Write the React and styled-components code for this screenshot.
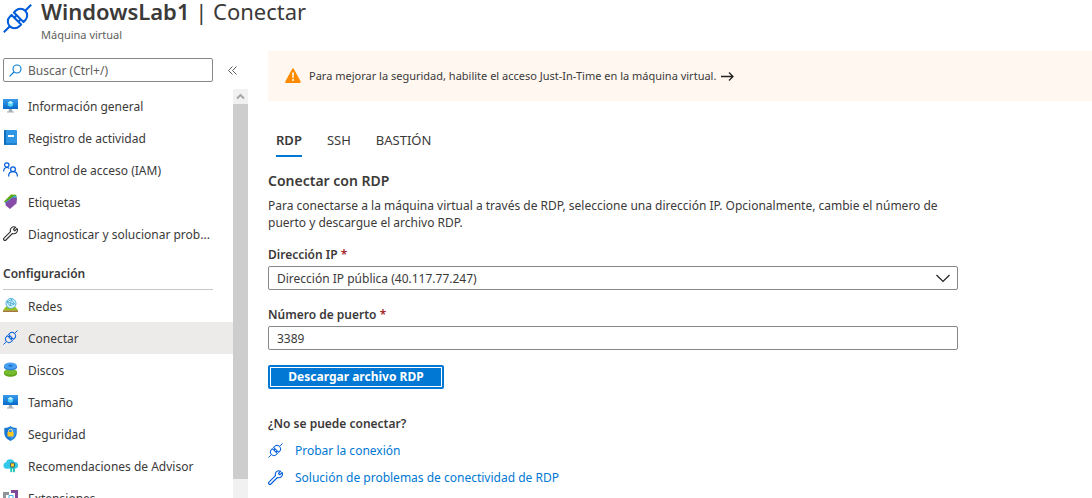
import React from "react";
import styled, { createGlobalStyle } from "styled-components";

const GlobalStyle = createGlobalStyle`
  *, *::before, *::after { box-sizing: border-box; }
  body {
    margin: 0;
    background: #fff;
    color: #3b3a39;
    font-family: "Noto Sans", "Open Sans", sans-serif;
    font-size: 12px;
    line-height: 16px;
  }
  button, input, select { font: inherit; color: inherit; }
`;

const Page = styled.div`
  display: flex;
  flex-direction: column;
  height: 100vh;
  overflow: hidden;
`;

const Header = styled.header`
  display: flex;
  flex: none;
  gap: 9px;
  height: 51px;
  padding-left: 3px;
`;

const HeaderIcon = styled.div`
  padding-top: 4px;
  svg { display: block; }
`;

const Title = styled.h1`
  margin: 0;
  font-size: 22px;
  line-height: 22px;
  font-weight: 400;
  white-space: nowrap;
  strong { font-weight: 600; }
`;

const Subtitle = styled.p`
  margin: 5px 0 0;
  font-size: 11px;
  color: #605e5c;
`;

const Body = styled.div`
  display: flex;
  flex: 1;
  min-height: 0;
`;

const Sidebar = styled.aside`
  display: flex;
  flex-direction: column;
  flex: none;
  width: 248px;
`;

const SearchRow = styled.div`
  display: flex;
  align-items: center;
  gap: 12px;
  flex: none;
  height: 38px;
  padding-left: 3px;
`;

const SearchBox = styled.label`
  display: flex;
  align-items: center;
  gap: 6px;
  width: 210px;
  height: 24px;
  padding: 0 5px;
  border: 1px solid #8a8886;
  border-radius: 2px;
`;

const SearchInput = styled.input`
  flex: 1;
  min-width: 0;
  padding: 2px 0 0;
  border: 0;
  outline: 0;
  background: none;
  &::placeholder { color: #605e5c; opacity: 1; }
`;

const CollapseButton = styled.button`
  display: flex;
  padding: 3px;
  border: 0;
  background: none;
`;

const MenuArea = styled.div`
  display: flex;
  flex: 1;
  min-height: 0;
`;

const Menu = styled.nav`
  flex: 1;
  min-width: 0;
  overflow: hidden;
  padding-top: 1px;
`;

const MenuItem = styled.a`
  display: flex;
  align-items: center;
  gap: 10px;
  height: 32px;
  padding: 2px 0 0 3px;
  color: inherit;
  text-decoration: none;
  white-space: nowrap;
  background: ${(p) => (p.$active ? "#edebe9" : "transparent")};
  svg { flex: none; margin-bottom: 3px; }
`;

const MenuHeading = styled.h2`
  margin: 0 20px 0 3px;
  padding: 16px 0 7px;
  border-bottom: 1px solid #c8c6c4;
  font-size: 12px;
  line-height: 16px;
  font-weight: 600;
`;

const ScrollTrack = styled.div`
  display: flex;
  flex-direction: column;
  flex: none;
  width: 15px;
  padding-bottom: 19px;
  background: #f1f1f1;
`;

const ScrollArrow = styled.div`
  display: flex;
  align-items: center;
  justify-content: center;
  height: 15px;
`;

const ScrollThumb = styled.div`
  flex: 1;
  background: #cdcdcd;
`;

const Main = styled.main`
  flex: 1;
  min-width: 0;
  padding-left: 20px;
`;

const Banner = styled.a`
  display: flex;
  align-items: center;
  gap: 8px;
  height: 50px;
  padding-left: 17px;
  border-radius: 2px 0 0 2px;
  background: #fff7f0;
  color: inherit;
  font-size: 11px;
  text-decoration: none;
`;

const BannerText = styled.span`
  display: flex;
  align-items: center;
  gap: 5px;
`;

const Tabs = styled.div`
  display: flex;
  gap: 25px;
  margin-top: 27px;
  padding-left: 8px;
`;

const Tab = styled.button`
  height: 29px;
  padding: 0 0 3px;
  border: 0;
  border-bottom: 2px solid ${(p) => (p.$active ? "#0078d4" : "transparent")};
  background: none;
  font-size: 13px;
  font-weight: ${(p) => (p.$active ? 600 : 400)};
`;

const Form = styled.form`
  max-width: 690px;
`;

const Heading = styled.h2`
  margin: 14px 0 6px;
  font-size: 14px;
  line-height: 20px;
  font-weight: 600;
`;

const Paragraph = styled.p`
  margin: 0;
  line-height: 17px;
`;

const Field = styled.div`
  margin-top: ${(p) => (p.$first ? 16 : 17)}px;
`;

const Label = styled.label`
  display: block;
  margin-bottom: 3px;
  font-weight: 600;
  font-size: 12px;
  span { color: #a4262c; }
`;

const SelectWrap = styled.div`
  position: relative;
  svg {
    position: absolute;
    right: 8px;
    top: 8px;
    pointer-events: none;
  }
`;

const Control = styled.input`
  display: block;
  width: 100%;
  height: 24px;
  padding: 1px 8px 0;
  border: 1px solid #8a8886;
  border-radius: 2px;
  background: #fff;
  appearance: none;
  outline: 0;
`;

const PrimaryButton = styled.button`
  display: block;
  width: 176px;
  height: 24px;
  margin-top: 15px;
  padding: 0;
  border: 0;
  border-radius: 2px;
  outline: 1px solid #fff;
  outline-offset: -3px;
  background: #0078d4;
  color: #fff;
  font-weight: 700;
`;

const HelpHeading = styled.h3`
  margin: 27px 0 5px;
  font-size: 12px;
  line-height: 16px;
  font-weight: 600;
`;

const HelpLink = styled.a`
  display: flex;
  align-items: center;
  gap: 12px;
  height: 27px;
  color: #0078d4;
  text-decoration: none;
`;

const Svg = ({ size = 15, box = "0 0 15 15", children }) => (
  <svg width={size} height={size} viewBox={box} fill="none" aria-hidden="true">
    {children}
  </svg>
);

const PlugIcon = ({ size = 15, width = 1.8 }) => (
  <Svg size={size} box="0 0 28 28">
    <g stroke="#015cda" strokeWidth={width} strokeLinejoin="round">
      <path d="M.8 27.2 6.600 21.400M21.400 6.600l5.800-5.800" />
      <g transform="rotate(-45 14 14)">
        <path d="M12.400 7.500H10a6.500 6.500 0 0 0 0 13h2.400zM15.600 7.500H18a6.500 6.500 0 0 1 0 13h-2.400z" />
        <path d="M12.400 11.300h3.200M12.400 16.700h3.200" />
      </g>
    </g>
  </Svg>
);

const WrenchIcon = ({ color = "#323130" }) => (
  <Svg>
    <path
      d="M12.7 1.2a3.7 3.7 0 0 0-5.2 4.5L1 12.1a1.3 1.3 0 0 0 1.9 1.9l6.5-6.5a3.7 3.7 0 0 0 4.7-5L11.8 4.8 10.4 3.5z"
      stroke={color}
      strokeWidth="1.1"
      strokeLinejoin="round"
    />
  </Svg>
);

const MonitorIcon = () => (
  <Svg>
    <defs>
      <linearGradient id="screen" x1="0" y1="0" x2="0" y2="1">
        <stop stopColor="#3a9bec" />
        <stop offset="1" stopColor="#0869c9" />
      </linearGradient>
    </defs>
    <path d="M0 1h15v10H0z" fill="url(#screen)" />
    <path d="M6 11h3l.4 2.4H11v1H4v-1h1.6z" fill="#a8adb2" />
    <path d="m7.5 3 2.6 1.5v3L7.5 9 4.9 7.500v-3z" fill="#50d2f5" />
    <path d="m7.500 3 2.600 1.500L7.500 6 4.900 4.500z" fill="#c3f1ff" />
  </Svg>
);

const LogIcon = () => (
  <Svg>
    <rect x="1" y="0" width="13" height="15" rx="1" fill="#2e96e4" />
    <path d="M1 1a1 1 0 0 1 1-1h1v15H2a1 1 0 0 1-1-1z" fill="#0f6cbd" />
    <path d="M3 13h11v1a1 1 0 0 1-1 1H3z" fill="#1c7fd0" />
    <rect x="5" y="5" width="6" height="2" fill="#fff" />
  </Svg>
);

const PeopleIcon = () => (
  <Svg>
    <g stroke="#015cda" strokeWidth="1.2">
      <circle cx="3.800" cy="3" r="2.200" />
      <path d="M.6 9.500c0-2.600 1.400-4 3.200-4 1 0 1.800.3 2.400 1" />
      <circle cx="10" cy="7.200" r="2.400" />
      <path d="M5.600 14.500c0-3 1.900-4.800 4.400-4.800s4.400 1.800 4.400 4.800" />
    </g>
  </Svg>
);

const TagIcon = () => (
  <Svg>
    <path d="M1 7.500 8 .4l5.200.4.4 4.600-6.800 7z" fill="#5ea60a" />
    <path d="m2 8.500 9.400-7 2.300 1.300v4L5 12.500z" fill="#32b4dc" />
    <path d="m2.500 9 7-5.400 4.300.2-.2 5.500L7 15l-4.300-3.600z" fill="#874ba8" />
  </Svg>
);

const NetworkIcon = () => (
  <Svg>
    <path d="m0 12.500 3.300-4.200h8.500l3.200 4.200z" fill="#95c11f" />
    <circle cx="8" cy="5.500" r="5" fill="#d9f3fb" stroke="#4bb0d8" />
    <path d="m4 4 4.500-2.500L11.500 6 7 8zM8.500 1.500 7 8M4 4l7.500 2" stroke="#3fa6d2" strokeWidth=".8" />
    <path d="m0 12.500 1.500-2h12l1.500 2z" fill="#95c11f" />
    <path d="M0 12.500h15V14H0z" fill="#a8763c" />
  </Svg>
);

const DisksIcon = () => (
  <Svg>
    <path d="M1 9.500h13v2c0 2-3 3.200-6.500 3.200S1 13.500 1 11.500z" fill="#5fa31c" />
    <ellipse cx="7.500" cy="9.800" rx="6.500" ry="3" fill="#76bc2d" />
    <path d="M1 4h13v1.200c0 2-3 3-6.500 3S1 7.200 1 5.200z" fill="#2a7fd8" />
    <ellipse cx="7.500" cy="3.800" rx="6.500" ry="3.200" fill="#4aa0f0" />
    <ellipse cx="7.500" cy="3.800" rx="2.200" ry="1" fill="#1c6fca" />
  </Svg>
);

const ShieldIcon = () => (
  <Svg>
    <path d="M7.500 0c2 1.500 3.500 1.900 6.200 2v5c0 3.600-2.600 6.200-6.200 8-3.600-1.800-6.200-4.400-6.200-8V2C4 1.900 5.500 1.500 7.500 0z" fill="#1778d6" />
    <path d="M7.500 1.300c1.700 1.200 3.100 1.500 5.200 1.700V7c0 3-2.200 5.200-5.200 6.800z" fill="#3d98ee" />
    <path d="M5.700 6.500V5a1.800 1.800 0 0 1 3.600 0v1.500" stroke="#ffe28a" />
    <rect x="4.500" y="6" width="6" height="4.500" rx=".6" fill="#ffc81e" />
  </Svg>
);

const AdvisorIcon = () => (
  <Svg>
    <path d="M3.500 10.800A3.300 3.300 0 0 1 3 4.300 4.300 4.300 0 0 1 11.200 4a3.400 3.400 0 0 1 .8 6.800z" fill="#32c8ea" />
    <path d="M7.300 9h1.900v5.500l-1-.7-.9.700zM10 9h1.900v5.500l-1-.7-.9.700z" fill="#1fc6b0" />
    <rect x="7.500" y="5" width="4" height="4" rx=".8" fill="#ffd02b" stroke="#3f5966" />
  </Svg>
);

const ExtensionsIcon = () => (
  <Svg>
    <path d="M0 2h6v3H3v4h3v3H0z" fill="#8f9499" />
    <path d="M8 0h7v8h-3V3H8z" fill="#804998" />
    <path d="M6 5.500h4v4H6z" stroke="#45b6e5" />
    <path d="M4 12h8v3H4z" fill="#804998" />
  </Svg>
);

const SearchIcon = () => (
  <Svg size={13} box="0 0 13 13">
    <circle cx="8" cy="5" r="4" stroke="#0078d4" strokeWidth="1.1" />
    <path d="M5 8 .6 12.400" stroke="#0078d4" strokeWidth="1.1" />
  </Svg>
);

const WarningIcon = () => (
  <Svg size={16} box="0 0 16 16">
    <path d="M7.100.9a1 1 0 0 1 1.800 0l6.800 12.600a1 1 0 0 1-.9 1.500H1.200a1 1 0 0 1-.9-1.500z" fill="#ff8c00" />
    <path d="M7.100 4.500h1.800L8.600 10H7.400z" fill="#fff" />
    <circle cx="8" cy="12" r="1" fill="#fff" />
  </Svg>
);

const mainItems = [
  ["Información general", MonitorIcon],
  ["Registro de actividad", LogIcon],
  ["Control de acceso (IAM)", PeopleIcon],
  ["Etiquetas", TagIcon],
  ["Diagnosticar y solucionar prob...", WrenchIcon],
];

const configItems = [
  ["Redes", NetworkIcon],
  ["Conectar", PlugIcon],
  ["Discos", DisksIcon],
  ["Tamaño", MonitorIcon],
  ["Seguridad", ShieldIcon],
  ["Recomendaciones de Advisor", AdvisorIcon],
  ["Extensiones", ExtensionsIcon],
];

const renderItem = ([label, Icon]) => (
  <MenuItem key={label} href="#" $active={label === "Conectar"}>
    <Icon />
    {label}
  </MenuItem>
);

export default function App() {
  return (
    <Page>
      <GlobalStyle />
      <Header>
        <HeaderIcon>
          <PlugIcon size={29} width={2} />
        </HeaderIcon>
        <div>
          <Title>
            <strong>WindowsLab1</strong> | Conectar
          </Title>
          <Subtitle>Máquina virtual</Subtitle>
        </div>
      </Header>
      <Body>
        <Sidebar>
          <SearchRow>
            <SearchBox>
              <SearchIcon />
              <SearchInput type="text" aria-label="Buscar" placeholder="Buscar (Ctrl+/)" />
            </SearchBox>
            <CollapseButton type="button" aria-label="Contraer menú">
              <Svg size={9} box="0 0 9 9">
                <path d="M4.500.5l-4 4 4 4M8.500.5l-4 4 4 4" stroke="#605e5c" />
              </Svg>
            </CollapseButton>
          </SearchRow>
          <MenuArea>
            <Menu>
              {mainItems.map(renderItem)}
              <MenuHeading>Configuración</MenuHeading>
              {configItems.map(renderItem)}
            </Menu>
            <ScrollTrack>
              <ScrollArrow>
                <Svg size={9} box="0 0 9 9">
                  <path d="M1 6.500 4.500 3 8 6.500" stroke="#a3a3a3" strokeWidth="1.800" />
                </Svg>
              </ScrollArrow>
              <ScrollThumb />
            </ScrollTrack>
          </MenuArea>
        </Sidebar>
        <Main>
          <Banner href="#">
            <WarningIcon />
            <BannerText>
              Para mejorar la seguridad, habilite el acceso Just-In-Time en la máquina virtual.
              <Svg size={13} box="0 0 13 13">
                <path d="M0 6.500h12M8 2.500l4 4-4 4" stroke="#201f1e" strokeWidth="1.300" />
              </Svg>
            </BannerText>
          </Banner>
          <Tabs role="tablist">
            <Tab type="button" role="tab" aria-selected="true" $active>RDP</Tab>
            <Tab type="button" role="tab" aria-selected="false">SSH</Tab>
            <Tab type="button" role="tab" aria-selected="false">BASTIÓN</Tab>
          </Tabs>
          <Form onSubmit={(e) => e.preventDefault()}>
            <Heading>Conectar con RDP</Heading>
            <Paragraph>
              Para conectarse a la máquina virtual a través de RDP, seleccione una dirección IP. Opcionalmente, cambie el número de puerto y descargue el archivo RDP.
            </Paragraph>
            <Field $first>
              <Label htmlFor="ip">Dirección IP <span>*</span></Label>
              <SelectWrap>
                <Control as="select" id="ip">
                  <option>Dirección IP pública (40.117.77.247)</option>
                </Control>
                <Svg size={14} box="0 0 14 14">
                  <path d="M.5 1 7 7.500 13.500 1" stroke="#201f1e" strokeWidth="1.200" />
                </Svg>
              </SelectWrap>
            </Field>
            <Field>
              <Label htmlFor="port">Número de puerto <span>*</span></Label>
              <Control id="port" type="text" defaultValue="3389" />
            </Field>
            <PrimaryButton type="submit">Descargar archivo RDP</PrimaryButton>
          </Form>
          <HelpHeading>¿No se puede conectar?</HelpHeading>
          <HelpLink href="#"><PlugIcon />Probar la conexión</HelpLink>
          <HelpLink href="#"><WrenchIcon color="#015cda" />Solución de problemas de conectividad de RDP</HelpLink>
        </Main>
      </Body>
    </Page>
  );
}
